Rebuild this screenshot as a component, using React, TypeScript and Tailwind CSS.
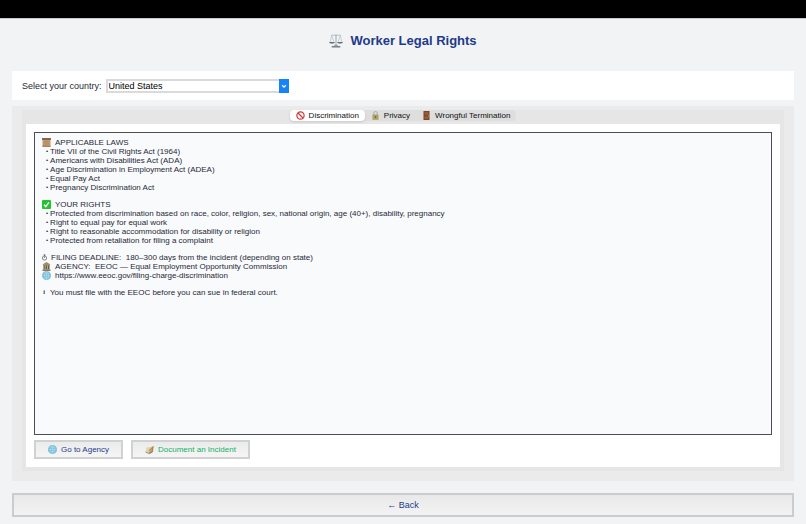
import { useState } from "react";
import type { ReactNode } from "react";

type IconProps = { className?: string };

function Scales({ className }: IconProps) {
  return (
    <svg viewBox="0 0 26 26" className={className} fill="none" aria-hidden="true">
      <path d="M13 2v19" stroke="#a3adb6" strokeWidth="2" />
      <path d="M4 3c3-2 5 0 9-1 4 1 6-1 9 1" stroke="#a4adb5" strokeWidth="1.6" />
      <path d="M5 3L2 15M5 3l4 12M21 3l-4 12M21 3l3 12" stroke="#b3bbc2" strokeWidth="1.200" />
      <path d="M0 15h11c-1 4-10 4-11 0zM15 15h11c-1 4-10 4-11 0z" fill="#66727d" />
      <path d="M10 20h6l1 2H9z" fill="#89949e" />
      <path d="M5 22.500h16v2.500H5z" fill="#66727d" />
    </svg>
  );
}

function Prohibited({ className }: IconProps) {
  return (
    <svg viewBox="0 0 18 18" className={className} fill="none" aria-hidden="true">
      <circle cx="9" cy="9" r="7.300" stroke="#cf3a34" strokeWidth="2.400" />
      <path d="M4 4l10 10" stroke="#cf3a34" strokeWidth="2.400" />
    </svg>
  );
}

function Lock({ className }: IconProps) {
  return (
    <svg viewBox="0 0 18 18" className={className} fill="none" aria-hidden="true">
      <path d="M5.500 8V4.500a3.500 3.500 0 0 1 7 0V8" stroke="#a7abaa" strokeWidth="2" />
      <rect x="3" y="7" width="12" height="10.500" rx="1" fill="#a99b5c" />
      <path d="M3 10h12M3 14h12" stroke="#c9bd80" strokeWidth="1" />
      <circle cx="9" cy="12" r="1.600" fill="#56512f" />
    </svg>
  );
}

function Door({ className }: IconProps) {
  return (
    <svg viewBox="0 0 18 18" className={className} aria-hidden="true">
      <path d="M3 0h12v18H3z" fill="#7b4526" />
      <path d="M5 2h8v6H5zM5 10h8v6H5z" fill="#965a35" />
      <circle cx="13" cy="9.500" r="1" fill="#d8b36a" />
    </svg>
  );
}

function Scroll({ className }: IconProps) {
  return (
    <svg viewBox="0 0 18 18" className={className} aria-hidden="true">
      <path d="M1 2h16v15H1z" fill="#bf9970" />
      <path d="M0 0h18v4H0z" fill="#8a6345" />
      <path d="M1 15h16v3H1z" fill="#a98260" />
      <path d="M4 7h10M4 9.500h9M4 12h10" stroke="#ab855f" strokeWidth="1" />
    </svg>
  );
}

function Check({ className }: IconProps) {
  return (
    <svg viewBox="0 0 18 18" className={className} fill="none" aria-hidden="true">
      <rect width="18" height="18" rx="2" fill="#20c52d" />
      <path d="M4 9.500l3.500 4L14 4.500" stroke="#fff" strokeWidth="2.600" />
    </svg>
  );
}

function Stopwatch({ className }: IconProps) {
  return (
    <svg viewBox="0 0 10 18" className={className} fill="none" stroke="#424955" aria-hidden="true">
      <circle cx="5" cy="10" r="4.200" strokeWidth="1.300" />
      <path d="M5 10V7M5 6V4M3 3.500h4" strokeWidth="1.300" />
    </svg>
  );
}

function Bank({ className }: IconProps) {
  return (
    <svg viewBox="0 0 18 18" className={className} aria-hidden="true">
      <path d="M9 0l8 5H1z" fill="#9b8b67" />
      <path d="M2 5h14v2H2z" fill="#6a5d47" />
      <path d="M3 7h12v8H3z" fill="#494235" />
      <path d="M3 7h2v8H3zM6.500 7h2v8h-2zM10 7h2v8h-2zM13.500 7h2v8h-2z" fill="#c0ac7f" />
      <path d="M1 15h16v3H1z" fill="#8a7b5c" />
    </svg>
  );
}

function Globe({ className }: IconProps) {
  return (
    <svg viewBox="0 0 18 18" className={className} fill="none" aria-hidden="true">
      <circle cx="9" cy="9" r="8.500" fill="#79bedc" />
      <path d="M1 9h16M9 1v16M3 4.500h12M3 13.500h12" stroke="#b4e0f0" strokeWidth="1" />
      <ellipse cx="9" cy="9" rx="4" ry="8" stroke="#b4e0f0" strokeWidth="1" />
      <circle cx="9" cy="9" r="8.200" stroke="#5ba8cc" strokeWidth=".7" />
    </svg>
  );
}

function Memo({ className }: IconProps) {
  return (
    <svg viewBox="0 0 18 18" className={className} aria-hidden="true">
      <path d="M3 5l12-2-1 10-6 3-7-3z" fill="#e0d4b4" />
      <path d="M1 13l7 3 6-3v2l-6 3-7-3z" fill="#9d8a68" />
      <path d="M15 3l2 2-1 9-7 4-1-3 5-4z" fill="#a08a5e" />
      <path d="M16 2l2 2-8 8-3 1 1-3z" fill="#b98f48" />
    </svg>
  );
}

const tabs = [
  { name: "Discrimination", Icon: Prohibited },
  { name: "Privacy", Icon: Lock },
  { name: "Wrongful Termination", Icon: Door },
];

const laws = [
  "Title VII of the Civil Rights Act (1964)",
  "Americans with Disabilities Act (ADA)",
  "Age Discrimination in Employment Act (ADEA)",
  "Equal Pay Act",
  "Pregnancy Discrimination Act",
];

const rights = [
  "Protected from discrimination based on race, color, religion, sex, national origin, age (40+), disability, pregnancy",
  "Right to equal pay for equal work",
  "Right to reasonable accommodation for disability or religion",
  "Protected from retaliation for filing a complaint",
];

function Line({ icon, children }: { icon: ReactNode; children: ReactNode }) {
  return (
    <p className="flex items-center gap-1">
      {icon}
      <span className="whitespace-pre-wrap">{children}</span>
    </p>
  );
}

function Bullets({ items }: { items: string[] }) {
  return (
    <ul className="pl-1">
      {items.map((item) => (
        <li key={item} className="flex gap-[2px]">
          <span className="text-[6px]">•</span>
          <span>{item}</span>
        </li>
      ))}
    </ul>
  );
}

export default function App() {
  const [active, setActive] = useState("Discrimination");
  return (
    <div className="flex min-h-screen flex-col bg-[#f2f3f5] font-['Liberation_Sans',Arial,sans-serif] text-[#1f2937]">
      <div className="h-[18px] bg-black" />
      <header className="flex h-[53px] items-center justify-center gap-[7px] border-t border-[#c8c9cb] pb-2">
        <Scales className="size-[14px]" />
        <h1 className="text-[13px] leading-4 font-bold text-[#1e3a8a]">Worker Legal Rights</h1>
      </header>

      <main className="flex grow flex-col px-3 pb-[7px]">
        <div className="flex h-[29px] items-center gap-1 bg-white px-[10px]">
          <label htmlFor="country" className="text-[9px] leading-3">
            Select your country:
          </label>
          <div className="relative flex">
            <select
              id="country"
              defaultValue="United States"
              className="h-[14px] w-[183px] appearance-none border-2 border-[#dadada] bg-white px-px text-[9px] leading-[10px] text-black"
            >
              <option>United States</option>
            </select>
            <span className="pointer-events-none absolute inset-y-0 right-0 flex w-[10px] items-center justify-center bg-[#1683f7]">
              <svg viewBox="0 0 8 8" className="size-[6px]" fill="none" stroke="#fff" strokeWidth="1.500" aria-hidden="true">
                <path d="M1.500 3L4 5.500 6.500 3" />
              </svg>
            </span>
          </div>
        </div>

        <section className="mt-[6px] flex grow flex-col bg-[#ebebeb] px-[10px] pt-1 pb-[10px]">
          <div className="flex grow flex-col bg-[#e6e6e6] px-1 pb-1">
            <div className="flex h-[14px] items-start justify-center">
              <div role="tablist" className="flex h-[11px] rounded-sm bg-[#dedede]">
                {tabs.map(({ name, Icon }) => (
                  <button
                    key={name}
                    role="tab"
                    aria-selected={active === name}
                    onClick={() => setActive(name)}
                    className={`flex items-center gap-1 rounded-sm px-[6px] text-[8px] leading-[10px] text-[#111] ${active === name ? "bg-white shadow-sm" : ""}`}
                  >
                    <Icon className="size-[9px]" />
                    {name}
                  </button>
                ))}
              </div>
            </div>

            <div className="flex grow flex-col gap-[5px] bg-white p-2">
              <article className="flex grow flex-col gap-2 border border-[#4b4e54] bg-[#f9fafc] px-[7px] py-[5px] text-[8px] leading-[9px]">
                <div>
                  <Line icon={<Scroll className="size-[9px]" />}>APPLICABLE LAWS</Line>
                  <Bullets items={laws} />
                </div>
                <div>
                  <Line icon={<Check className="size-[9px]" />}>YOUR RIGHTS</Line>
                  <Bullets items={rights} />
                </div>
                <div>
                  <Line icon={<Stopwatch className="h-[9px] w-[5px]" />}>
                    {"FILING DEADLINE:  180–300 days from the incident (depending on state)"}
                  </Line>
                  <Line icon={<Bank className="size-[9px]" />}>
                    {"AGENCY:  EEOC — Equal Employment Opportunity Commission"}
                  </Line>
                  <Line icon={<Globe className="size-[9px]" />}>
                    https://www.eeoc.gov/filing-charge-discrimination
                  </Line>
                </div>
                <Line icon={<span className="w-1 text-center font-['Liberation_Serif',serif] text-[6px] font-bold">i</span>}>
                  You must file with the EEOC before you can sue in federal court.
                </Line>
              </article>
              <div className="flex gap-2">
                <button className="flex h-[19px] items-center gap-1 border-2 border-[#d0d1d2] bg-linear-to-b from-[#ebebeb] to-[#f5f5f5] px-3 text-[8px] leading-[10px] text-[#1e3a8a]">
                  <Globe className="size-[9px]" />
                  Go to Agency
                </button>
                <button className="flex h-[19px] items-center gap-1 border-2 border-[#d0d1d2] bg-linear-to-b from-[#ebebeb] to-[#f5f5f5] px-3 text-[8px] leading-[10px] text-[#10b068]">
                  <Memo className="size-[9px]" />
                  Document an Incident
                </button>
              </div>
            </div>
          </div>
        </section>

        <button className="mt-3 h-6 border-2 border-[#cbccd0] bg-linear-to-b from-[#e9e9ea] to-[#f3f3f4] text-[9px] leading-3 text-[#1e3a8a]">
          ← Back
        </button>
      </main>
    </div>
  );
}
